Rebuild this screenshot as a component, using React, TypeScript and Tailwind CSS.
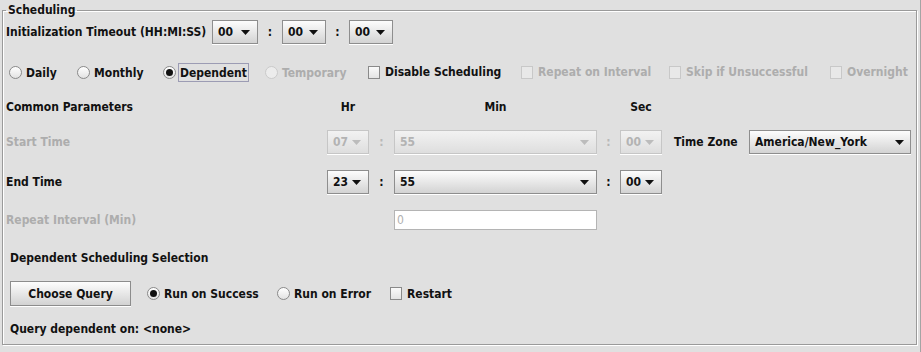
import React from 'react';

const dis = 'text-[#adadad]';

function Arrow({ disabled }: { disabled?: boolean }) {
  return (
    <svg width="9" height="5" viewBox="0 0 9 5" className="shrink-0">
      <path d="M0 0H9L4.5 5Z" fill={disabled ? '#bcbcbc' : '#111'} />
    </svg>
  );
}

interface ComboProps {
  value: string;
  width: string;
  disabled?: boolean;
}

function Combo({ value, width, disabled }: ComboProps) {
  return (
    <div
      className={`${width} h-[24px] shrink-0 flex items-center justify-between pl-[5px] pr-[7px] border shadow-[0_1px_0_#fff] ${
        disabled
          ? 'border-[#c6c6c6] bg-gradient-to-b from-[#f2f2f2] to-[#dedede] text-[#b3b3b3]'
          : 'border-[#8e8e8e] bg-gradient-to-b from-[#fdfdfd] to-[#d3d3d3] text-[#111]'
      }`}
    >
      <span>{value}</span>
      <Arrow disabled={disabled} />
    </div>
  );
}

function Colon({ width, disabled }: { width: string; disabled?: boolean }) {
  return <div className={`${width} shrink-0 text-center ${disabled ? 'text-[#b8b8b8]' : ''}`}>:</div>;
}

interface ToggleProps {
  label: string;
  width: string;
  checked?: boolean;
  disabled?: boolean;
  focus?: boolean;
}

function Radio({ label, width, checked, disabled, focus }: ToggleProps) {
  return (
    <div className={`${width} shrink-0 flex items-center`}>
      <div
        className={`w-[13px] h-[13px] rounded-full border flex items-center justify-center shrink-0 ${
          disabled
            ? 'border-[#cacaca] bg-[#ececec]'
            : 'border-[#8a8a8a] bg-gradient-to-b from-[#ffffff] to-[#e2e2e2]'
        }`}
      >
        {checked && <div className="w-[7px] h-[7px] rounded-full bg-[#111]" />}
      </div>
      <span
        className={`ml-[2px] px-[1px] h-[19px] leading-[18px] border ${
          focus ? 'border-[#9c9cb4]' : 'border-transparent'
        } ${disabled ? dis : ''}`}
      >
        {label}
      </span>
    </div>
  );
}

function Check({ label, width, disabled }: ToggleProps) {
  return (
    <div className={`${width} shrink-0 flex items-center`}>
      <div
        className={`w-[12px] h-[13px] border shrink-0 ${
          disabled
            ? 'border-[#c8c8c8] bg-[#e8e8e8]'
            : 'border-[#8a8a8a] bg-gradient-to-b from-[#fafafa] to-[#e4e4e4]'
        }`}
      />
      <span className={`ml-[5px] ${disabled ? dis : ''}`}>{label}</span>
    </div>
  );
}

export default function App() {
  return (
    <div className="w-[921px] h-[352px] bg-[#e0e0e0] border-r border-[#a4a4a4] overflow-hidden font-['DejaVu_Sans_Condensed','DejaVu_Sans',sans-serif] font-bold text-[12px] text-[#111] leading-[16px] whitespace-nowrap">
      <fieldset className="ml-[2px] mt-[3px] w-[915px] h-[342px] border border-[#9a9a9a] shadow-[inset_1px_1px_0_#fff,1px_1px_0_#fff] pl-[3px] pr-[3px]">
        <legend className="px-[2px] leading-[14px]">Scheduling</legend>

        {/* Initialization timeout */}
        <div className="mt-[3px] h-[24px] flex items-center">
          <div className="w-[206px] shrink-0">Initialization Timeout (HH:MI:SS)</div>
          <Combo value="00" width="w-[46px]" />
          <Colon width="w-[24px]" />
          <Combo value="00" width="w-[44px]" />
          <Colon width="w-[23px]" />
          <Combo value="00" width="w-[44px]" />
        </div>

        {/* Schedule type */}
        <div className="mt-[18px] h-[20px] flex items-center pl-[3px]">
          <Radio label="Daily" width="w-[68px]" />
          <Radio label="Monthly" width="w-[86px]" />
          <Radio label="Dependent" width="w-[102px]" checked focus />
          <Radio label="Temporary" width="w-[103px]" disabled />
          <Check label="Disable Scheduling" width="w-[153px]" />
          <Check label="Repeat on Interval" width="w-[148px]" disabled />
          <Check label="Skip if Unsuccessful" width="w-[161px]" disabled />
          <Check label="Overnight" width="w-[80px]" disabled />
        </div>

        {/* Column headers */}
        <div className="mt-[17px] h-[16px] flex items-center">
          <div className="w-[321px] shrink-0">Common Parameters</div>
          <div className="w-[42px] shrink-0 text-center">Hr</div>
          <div className="w-[25px] shrink-0" />
          <div className="w-[203px] shrink-0 text-center">Min</div>
          <div className="w-[23px] shrink-0" />
          <div className="w-[42px] shrink-0 text-center">Sec</div>
        </div>

        {/* Start time */}
        <div className="mt-[15px] h-[24px] flex items-center">
          <div className={`w-[321px] shrink-0 ${dis}`}>Start Time</div>
          <Combo value="07" width="w-[42px]" disabled />
          <Colon width="w-[25px]" disabled />
          <Combo value="55" width="w-[203px]" disabled />
          <Colon width="w-[23px]" disabled />
          <Combo value="00" width="w-[42px]" disabled />
          <div className="w-[87px] shrink-0 pl-[12px]">Time Zone</div>
          <div className="w-[162px] shrink-0 h-[24px] flex items-center justify-between pl-[5px] pr-[6px] border border-[#8e8e8e] bg-gradient-to-b from-[#fdfdfd] to-[#d3d3d3] shadow-[0_1px_0_#fff]">
            <span>America/New_York</span>
            <Arrow />
          </div>
        </div>

        {/* End time */}
        <div className="mt-[16px] h-[24px] flex items-center">
          <div className="w-[321px] shrink-0">End Time</div>
          <Combo value="23" width="w-[42px]" />
          <Colon width="w-[25px]" />
          <Combo value="55" width="w-[203px]" />
          <Colon width="w-[23px]" />
          <Combo value="00" width="w-[42px]" />
        </div>

        {/* Repeat interval */}
        <div className="mt-[16px] h-[20px] flex items-center">
          <div className={`w-[388px] shrink-0 ${dis}`}>Repeat Interval (Min)</div>
          <div className="w-[203px] h-[20px] shrink-0 bg-white border border-[#b4b4b4] pl-[2px] leading-[18px] font-normal text-[#b0b0b0]">
            0
          </div>
        </div>

        {/* Dependent scheduling */}
        <div className="pl-[4px]">
          <div className="mt-[20px] h-[16px]">Dependent Scheduling Selection</div>

          <div className="mt-[15px] h-[25px] flex items-center">
            <div className="w-[121px] h-[25px] shrink-0 flex items-center justify-center border border-[#8c8c8c] bg-gradient-to-b from-[#fdfdfd] to-[#d2d2d2] shadow-[0_1px_0_#fff]">
              Choose Query
            </div>
            <div className="w-[16px] shrink-0" />
            <Radio label="Run on Success" width="w-[130px]" checked />
            <Radio label="Run on Error" width="w-[113px]" />
            <Check label="Restart" width="w-[70px]" />
          </div>

          <div className="mt-[15px] h-[16px]">Query dependent on: &lt;none&gt;</div>
        </div>
      </fieldset>
    </div>
  );
}
